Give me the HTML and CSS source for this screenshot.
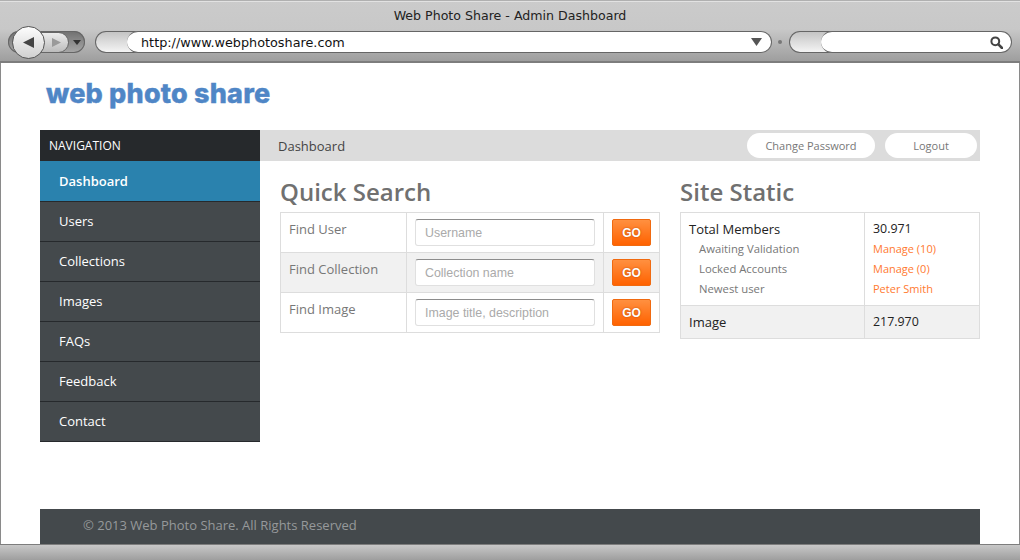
FILE: index.html
```html
<!DOCTYPE html>
<html>
    <head>
        <meta charset="UTF-8">
        <title>Web Photo Share - Admin Dashboard</title>
        <link rel="stylesheet" href="styles.css">
    </head>
    <body>
        <div class="browser">
            <div class="toolbar">
                <div class="winTitle">Web Photo Share - Admin Dashboard</div>
                <div class="toolRow">
                    <div class="navGroup">
                        <div class="btnBack"><svg width="13" height="13" viewBox="0 0 13 13"><path d="M1 6.5 L12 1 V12 Z" fill="#444"/></svg></div>
                        <div class="btnForward"><svg width="11" height="11" viewBox="0 0 11 11"><path d="M1 1 L10 5.5 L1 10 Z" fill="#9a9a9a"/></svg></div>
                        <div class="btnMenu"><svg width="8" height="5" viewBox="0 0 8 5"><path d="M0 0 H8 L4 5 Z" fill="#333"/></svg></div>
                    </div>
                    <div class="urlBar">
                        <div class="pillCap"></div>
                        <div class="pillField">
                            <span class="urlText">http://www.webphotoshare.com</span>
                            <svg width="11" height="8" viewBox="0 0 11 8"><path d="M0 0 H11 L5.5 8 Z" fill="#555"/></svg>
                        </div>
                    </div>
                    <div class="grip"></div>
                    <div class="searchBar">
                        <div class="pillCap"></div>
                        <div class="pillField searchField">
                            <svg width="13" height="13" viewBox="0 0 13 13"><circle cx="5.3" cy="5.3" r="3.9" fill="none" stroke="#444" stroke-width="2"/><path d="M8.4 8.4 L12 12" stroke="#444" stroke-width="2.6" stroke-linecap="round"/></svg>
                        </div>
                    </div>
                </div>
            </div>

            <div class="page">
                <div class="logo">web photo share</div>
                <div class="layout">
                    <div class="sidebar">
                        <div class="navTitle">NAVIGATION</div>
                        <a class="navItem navActive">Dashboard</a>
                        <a class="navItem">Users</a>
                        <a class="navItem">Collections</a>
                        <a class="navItem">Images</a>
                        <a class="navItem">FAQs</a>
                        <a class="navItem">Feedback</a>
                        <a class="navItem">Contact</a>
                    </div>
                    <div class="content">
                        <div class="topBar">
                            <span class="crumb">Dashboard</span>
                            <div class="topLinks">
                                <a class="pillLink pillPassword">Change Password</a>
                                <a class="pillLink pillLogout">Logout</a>
                            </div>
                        </div>
                        <div class="panels">
                            <div class="panelSearch">
                                <h2>Quick Search</h2>
                                <table class="grid">
                                    <tr>
                                        <td class="colLabel">Find User</td>
                                        <td class="colInput"><input class="field" type="text" placeholder="Username"></td>
                                        <td class="colGo"><button class="btnGo">GO</button></td>
                                    </tr>
                                    <tr class="alt">
                                        <td class="colLabel">Find Collection</td>
                                        <td class="colInput"><input class="field" type="text" placeholder="Collection name"></td>
                                        <td class="colGo"><button class="btnGo">GO</button></td>
                                    </tr>
                                    <tr>
                                        <td class="colLabel">Find Image</td>
                                        <td class="colInput"><input class="field" type="text" placeholder="Image title, description"></td>
                                        <td class="colGo"><button class="btnGo">GO</button></td>
                                    </tr>
                                </table>
                            </div>
                            <div class="panelStats">
                                <h2>Site Static</h2>
                                <table class="grid">
                                    <tr>
                                        <td class="statName">
                                            <div class="statMain">Total Members</div>
                                            <div class="statSub">Awaiting Validation</div>
                                            <div class="statSub">Locked Accounts</div>
                                            <div class="statSub">Newest user</div>
                                        </td>
                                        <td class="statValue">
                                            <div class="statMain">30.971</div>
                                            <div class="statLink">Manage (10)</div>
                                            <div class="statLink">Manage (0)</div>
                                            <div class="statLink">Peter Smith</div>
                                        </td>
                                    </tr>
                                    <tr class="alt">
                                        <td class="statName"><div class="statMain">Image</div></td>
                                        <td class="statValue"><div class="statMain">217.970</div></td>
                                    </tr>
                                </table>
                            </div>
                        </div>
                    </div>
                </div>
                <div class="footer">© 2013 Web Photo Share. All Rights Reserved</div>
            </div>

            <div class="statusBar"></div>
        </div>
    </body>
</html>
```

FILE: styles.css
```css
html, body {
    margin: 0;
    padding: 0;
    height: 560px;
    overflow: hidden;
    background: #fff;
}
.browser {
    display: flex;
    flex-direction: column;
    height: 560px;
    font-family: "Open Sans", sans-serif;
}

/* window chrome */
.toolbar {
    height: 60px;
    flex: none;
    border-top: 1px solid #b0b0b0;
    border-bottom: 2px solid #7d7d7d;
    background: linear-gradient(#cbcbcb 0, #c8c8c8 28px, #9e9e9e 100%);
    box-shadow: inset 0 1px 0 #e2e2e2;
}
.winTitle {
    height: 30px;
    line-height: 29px;
    text-align: center;
    font-family: "DejaVu Sans", sans-serif;
    font-size: 12.6px;
    color: #222;
}
.toolRow {
    display: flex;
    align-items: center;
    height: 22px;
    padding: 0 8px;
}
.navGroup {
    display: flex;
    align-items: center;
    width: 77px;
    height: 22px;
    flex: none;
    border-radius: 11px;
    background: linear-gradient(#707070, #a8a8a8);
    box-shadow: inset 0 0 0 1px #666;
}
.btnBack {
    display: flex;
    align-items: center;
    justify-content: center;
    width: 31px;
    height: 31px;
    margin-left: 4px;
    flex: none;
    position: relative;
    z-index: 1;
    border: 1px solid #555;
    border-radius: 50%;
    background: linear-gradient(#fdfdfd, #d0d0d0);
}
.btnForward {
    display: flex;
    align-items: center;
    justify-content: center;
    width: 32px;
    height: 21px;
    margin-left: -8px;
    padding-left: 6px;
    box-sizing: border-box;
    flex: none;
    border: 1px solid #666;
    border-radius: 0 11px 11px 0;
    background: linear-gradient(#ececec, #bcbcbc);
}
.btnMenu {
    display: flex;
    align-items: center;
    justify-content: center;
    width: 15px;
    flex: none;
}
.urlBar {
    display: flex;
    width: 677px;
    height: 22px;
    margin-left: 10px;
    flex: none;
}
.pillCap {
    width: 45px;
    height: 22px;
    flex: none;
    box-sizing: border-box;
    border: 1px solid #666;
    border-right: 0;
    border-radius: 11px 0 0 11px;
    background: linear-gradient(#c4c4c4, #f4f4f4);
}
.pillField {
    display: flex;
    align-items: center;
    justify-content: space-between;
    flex: 1;
    margin-left: -13px;
    padding: 0 9px 0 14px;
    box-sizing: border-box;
    border: 1px solid #666;
    border-left: 0;
    border-radius: 11px;
    background: #fff;
}
.urlText {
    font-family: "DejaVu Sans", sans-serif;
    font-size: 12.8px;
    color: #111;
}
.grip {
    width: 4px;
    height: 4px;
    margin: 0 7px 0 6px;
    flex: none;
    border-radius: 50%;
    background: #777;
}
.searchBar {
    display: flex;
    flex: none;
    width: 223px;
    height: 22px;
}
.searchField {
    justify-content: flex-end;
    padding-right: 8px;
}

/* page */
.page {
    flex: 1;
    display: flex;
    flex-direction: column;
    padding: 0 39px;
    border-left: 1px solid #8a8a8a;
    border-right: 1px solid #8a8a8a;
    min-height: 0;
}
.logo {
    height: 67px;
    flex: none;
    padding-left: 6px;
    line-height: 61px;
    font-family: "Inter", sans-serif;
    font-weight: 800;
    font-size: 27px;
    letter-spacing: 0.2px;
    color: #4f86c6;
    -webkit-text-stroke: 0.4px #4f86c6;
}
.layout {
    display: flex;
    flex: 1;
}
.sidebar {
    width: 220px;
    flex: none;
}
.navTitle {
    height: 31px;
    line-height: 31px;
    padding-left: 9px;
    background: #26292c;
    color: #fff;
    font-size: 12px;
}
.navItem {
    display: block;
    height: 39px;
    line-height: 39px;
    padding-left: 19px;
    border-bottom: 1px solid #26292c;
    background: #44494c;
    color: #fff;
    font-size: 13px;
}
.navActive {
    height: 40px;
    line-height: 41px;
    background: #2a82ae;
    font-weight: 600;
}
.content {
    flex: 1;
}
.topBar {
    display: flex;
    align-items: center;
    justify-content: space-between;
    height: 31px;
    padding-left: 18px;
    background: #dcdcdc;
}
.crumb {
    font-size: 13px;
    color: #444;
}
.topLinks {
    display: flex;
    gap: 10px;
    padding-right: 3px;
}
.pillLink {
    height: 25px;
    line-height: 25px;
    text-align: center;
    border-radius: 13px;
    background: #fff;
    color: #777;
    font-size: 11px;
}
.pillPassword {
    width: 128px;
}
.pillLogout {
    width: 92px;
}
.panels {
    display: flex;
    gap: 20px;
    padding: 0 0 0 20px;
}
.panelSearch {
    width: 380px;
}
.panelStats {
    width: 300px;
}
h2 {
    margin: 0;
    height: 51px;
    box-sizing: border-box;
    padding-top: 14px;
    line-height: 34px;
    font-size: 24px;
    font-weight: 600;
    color: #707070;
}

/* tables */
.grid {
    width: 100%;
    border-collapse: collapse;
    table-layout: fixed;
}
.grid td {
    border: 1px solid #ddd;
    padding: 6px 0 0 8px;
    box-sizing: border-box;
    vertical-align: top;
}
.alt td {
    background: #f1f1f1;
}
.colLabel {
    width: 126px;
    height: 40px;
    font-size: 13px;
    line-height: 20px;
    color: #777;
}
.colInput {
    width: 197px;
}
.field {
    display: block;
    width: 180px;
    height: 27px;
    box-sizing: border-box;
    padding: 0 9px;
    border: 1px solid #e0e0e0;
    border-top-color: #8c8c8c;
    border-radius: 3px;
    background: #fff;
    font-family: "Liberation Sans", sans-serif;
    font-size: 12.4px;
    outline: none;
}
.field::placeholder {
    color: #aaa;
    opacity: 1;
}
.btnGo {
    display: block;
    width: 39px;
    height: 27px;
    padding: 0;
    border: 1px solid #f06a10;
    border-radius: 2px;
    background: linear-gradient(#ff9040, #ff6200);
    color: #fff;
    font-family: "Liberation Sans", sans-serif;
    font-weight: bold;
    font-size: 12px;
    text-shadow: 0 0 2px #b84a00;
}
.grid .statName {
    width: 184px;
    padding-bottom: 6px;
}
.grid .statValue {
    padding-bottom: 6px;
}
.statMain {
    height: 20px;
    line-height: 20px;
    font-size: 13px;
    color: #222;
}
.statValue .statMain {
    font-size: 12.4px;
}
.statSub {
    height: 20px;
    line-height: 20px;
    padding-left: 10px;
    font-size: 11.3px;
    color: #777;
}
.statLink {
    height: 20px;
    line-height: 20px;
    font-size: 11px;
    color: #ff7a30;
}

/* bottom */
.footer {
    height: 35px;
    flex: none;
    line-height: 33px;
    padding-left: 43px;
    background: #44494c;
    color: #96999b;
    font-size: 13px;
}
.statusBar {
    height: 16px;
    flex: none;
    border-top: 1px solid #7d7d7d;
    box-sizing: border-box;
    background: linear-gradient(#c8c8c8, #9e9e9e);
}
```
